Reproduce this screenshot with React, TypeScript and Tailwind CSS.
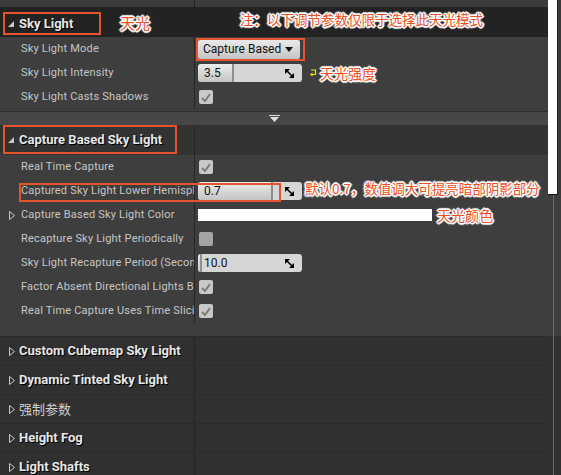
import React from "react";

const ANN =
  "text-[#f04f23] whitespace-nowrap leading-none font-['Microsoft_YaHei','Noto_Sans_CJK_SC',sans-serif] [text-shadow:1px_0_0_#fff,-1px_0_0_#fff,0_1px_0_#fff,0_-1px_0_#fff,1px_1px_0_#fff,-1px_-1px_0_#fff,1px_-1px_0_#fff,-1px_1px_0_#fff,2px_0_1px_#fff,-2px_0_1px_#fff,0_2px_1px_#fff,0_-2px_1px_#fff]";

const HEAD = "text-[13px] font-bold text-[#e6e6e6] [text-shadow:1px_1px_0_#000]";

function OpenArrow() {
  return (
    <svg width="6" height="6" viewBox="0 0 6 6" className="shrink-0">
      <polygon points="6,0 6,6 0,6" fill="#c8c8c8" />
    </svg>
  );
}

function ClosedArrow() {
  return (
    <svg width="6" height="9" viewBox="0 0 6 9" className="shrink-0">
      <polygon points="0.5,0.5 5.5,4.5 0.5,8.5" fill="none" stroke="#c8c8c8" strokeWidth="1" />
    </svg>
  );
}

function ResetIcon() {
  return (
    <svg width="9" height="9" viewBox="0 0 9 9" className="shrink-0">
      <polygon points="0,0 5,0 0,5" fill="#000" />
      <polygon points="9,9 4,9 9,4" fill="#000" />
      <line x1="1" y1="1" x2="8" y2="8" stroke="#000" strokeWidth="1.6" />
    </svg>
  );
}

function Check({ on }: { on: boolean }) {
  return (
    <div
      className={
        "w-[14px] h-[14px] rounded-[2px] flex items-center justify-center ml-[1px] " +
        (on ? "bg-[#c9c9c9]" : "bg-[#a4a4a4]")
      }
    >
      {on && (
        <svg width="10" height="9" viewBox="0 0 10 9">
          <path d="M1 5 L4 8 L9 1" fill="none" stroke="#7c7c7c" strokeWidth="2" />
        </svg>
      )}
    </div>
  );
}

function Slider({ value, pct }: { value: string; pct: number }) {
  return (
    <div className="relative w-[104px] h-[18px] shrink-0 rounded-[3px] bg-[#d6d6d6] overflow-hidden flex items-center">
      <div
        className="absolute left-0 top-0 bottom-0 bg-gradient-to-b from-[#ececec] to-[#c4c4c4] border-r-2 border-[#8e8e8e] rounded-l-[3px]"
        style={{ width: `${pct}%` }}
      />
      <span className="relative pl-[6px] text-[12px] text-[#111]">{value}</span>
      <span className="relative ml-auto mr-[8px]">
        <ResetIcon />
      </span>
    </div>
  );
}

function Row({
  label,
  children,
  arrow,
}: {
  label: string;
  children?: React.ReactNode;
  arrow?: boolean;
}) {
  return (
    <div className="relative flex h-6 shrink-0">
      <div className="relative w-[195px] shrink-0 border-r border-[#262626] flex items-center pl-[21px] overflow-hidden whitespace-nowrap tracking-[0.2px]">
        {arrow && (
          <span className="absolute left-[9px]">
            <ClosedArrow />
          </span>
        )}
        {label}
      </div>
      <div className="flex items-center pl-[3px] min-w-0">{children}</div>
    </div>
  );
}

function Category({ title, cjk }: { title: string; cjk?: boolean }) {
  return (
    <div className="flex h-[29px] shrink-0 border-t border-[#2a2a2a] bg-[#303030]">
      <div className="w-[195px] shrink-0 border-r border-[#262626] flex items-center pl-[9px] gap-[4px] whitespace-nowrap">
        <ClosedArrow />
        {cjk ? (
          <span className="text-[13px] text-[#cfcfcf] font-['Noto_Sans_CJK_SC',sans-serif]">{title}</span>
        ) : (
          <span className={HEAD}>{title}</span>
        )}
      </div>
    </div>
  );
}

export default function App() {
  return (
    <div className="flex w-[561px] h-[475px] overflow-hidden bg-[#303030] font-['Roboto',sans-serif] text-[11px] text-[#c6c6c6]">
      <div className="w-[548px] shrink-0 flex flex-col">
        {/* tail of the row above */}
        <div className="flex h-[7px] shrink-0 bg-[#3c3c3c]">
          <div className="w-[195px] border-r border-[#222]" />
        </div>

        {/* Sky Light header */}
        <div className="flex h-[30px] shrink-0 items-center bg-[#232323]">
          <div className="w-[195px] shrink-0 flex items-center h-full pl-[3px]">
            <div className="self-end mb-[2px] flex items-center h-[23px] w-[98px] border-2 border-[#e4552c] pl-[3px] gap-[5px]">
              <OpenArrow />
              <span className={HEAD}>Sky Light</span>
            </div>
            <span className={ANN + " text-[15px] ml-[19px]"}>天光</span>
          </div>
          <div className="pl-[45px]">
            <span className={ANN + " text-[13.5px]"}>注：以下调节参数仅限于选择此天光模式</span>
          </div>
        </div>

        {/* Sky Light properties */}
        <div className="shrink-0 bg-[#3e3e3e] pb-[2px]">
          <Row label="Sky Light Mode">
            <div className="flex items-center h-[23px] border-2 border-[#e4552c] pr-[3px] -ml-[2px]">
              <div className="w-[102px] h-[19px] rounded-[2px] bg-gradient-to-b from-[#eaeaea] to-[#c4c4c4] flex items-center pl-[5px] pr-[7px] text-[12px] text-[#111]">
                Capture Based
                <svg width="8" height="5" viewBox="0 0 8 5" className="ml-auto">
                  <polygon points="0,0 8,0 4,5" fill="#111" />
                </svg>
              </div>
            </div>
          </Row>
          <Row label="Sky Light Intensity">
            <Slider value="3.5" pct={35} />
            <svg width="7" height="8" viewBox="0 0 7 8" className="ml-[8px] shrink-0">
              <path d="M1 1 L5.5 1 L5.5 5.5 L1.5 5.5" fill="none" stroke="#f2e600" strokeWidth="1.2" />
              <polygon points="0,5.5 2.5,3.5 2.5,7.5" fill="#f2e600" />
            </svg>
            <span className={ANN + " text-[14px] ml-[3px]"}>天光强度</span>
          </Row>
          <Row label="Sky Light Casts Shadows">
            <Check on />
          </Row>
        </div>

        {/* advanced expander */}
        <div className="h-[14px] shrink-0 border-t border-[#2e2e2e] bg-[#474747] flex items-center justify-center">
          <svg width="11" height="7" viewBox="0 0 11 7">
            <rect x="0" y="0" width="11" height="1" fill="#e0e0e0" />
            <polygon points="1,2 10,2 5.5,7" fill="#e0e0e0" />
          </svg>
        </div>

        {/* Capture Based Sky Light header */}
        <div className="flex h-[30px] shrink-0 bg-[#333333]">
          <div className="w-[195px] shrink-0 border-r border-[#262626] pl-[3px]">
            <div className="flex items-center h-[29px] w-[174px] border-2 border-[#e4552c] pl-[3px] gap-[5px]">
              <OpenArrow />
              <span className={HEAD}>Capture Based Sky Light</span>
            </div>
          </div>
        </div>

        {/* Capture properties */}
        <div className="shrink-0 flex flex-col bg-[#3e3e3e] pb-[13px]">
          <Row label="Real Time Capture">
            <Check on />
          </Row>
          <Row label="Captured Sky Light Lower Hemisphere Color">
            <Slider value="0.7" pct={72} />
            <span className={ANN + " text-[13.5px] ml-[3px] -mt-[4px]"}>默认0.7，数值调大可提亮暗部阴影部分</span>
            <div className="absolute left-[19px] top-[4px] w-[262px] h-[19px] border-2 border-[#e4552c]" />
          </Row>
          <Row label="Capture Based Sky Light Color" arrow>
            <div className="w-[234px] h-[12px] shrink-0 bg-white" />
            <span className={ANN + " text-[14px] ml-[5px]"}>天光颜色</span>
          </Row>
          <Row label="Recapture Sky Light Periodically">
            <Check on={false} />
          </Row>
          <Row label="Sky Light Recapture Period (Seconds)">
            <Slider value="10.0" pct={4} />
          </Row>
          <Row label="Factor Absent Directional Lights Brightness">
            <Check on />
          </Row>
          <Row label="Real Time Capture Uses Time Slicing">
            <Check on />
          </Row>
        </div>

        <Category title="Custom Cubemap Sky Light" />
        <Category title="Dynamic Tinted Sky Light" />
        <Category title="强制参数" cjk />
        <Category title="Height Fog" />
        <Category title="Light Shafts" />
      </div>

      {/* right edge */}
      <div className="w-[13px] shrink-0 flex flex-col">
        <div className="h-[195px] shrink-0 flex bg-[#3a3a3a]">
          <div className="w-[9px] bg-white border-b border-[#111]" />
          <div className="w-px bg-[#1c1c1c]" />
        </div>
        <div className="h-[141px] shrink-0 bg-[#3e3e3e] pl-[5px]">
          <div className="w-px h-full bg-[#6a6a6a]" />
        </div>
        <div className="flex-1 bg-[#303030] pl-[5px]">
          <div className="w-px h-full bg-[#6a6a6a]" />
        </div>
      </div>
    </div>
  );
}
